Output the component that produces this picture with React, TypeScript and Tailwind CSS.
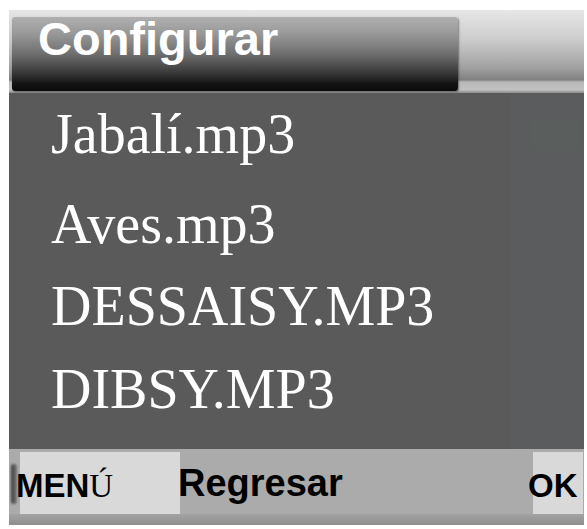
import React from "react";

const serif = { fontFamily: '"Liberation Serif", "Times New Roman", serif' };

export default function App() {
  const files = [
    { name: "Jabalí.mp3", mt: "mt-[14px]" },
    { name: "Aves.mp3", mt: "mt-[36px]" },
    { name: "DESSAISY.MP3", mt: "mt-[28px]" },
    { name: "DIBSY.MP3", mt: "mt-[29px]" },
  ];
  return (
    <div className="w-[587px] h-[529px] bg-white overflow-hidden font-['Liberation_Sans',Arial,sans-serif]">
      <div className="ml-[9px] pt-[10px] w-[575px] flex flex-col">
        {/* Header */}
        <div className="h-[83px] bg-[linear-gradient(to_bottom,#e6e6e6_0%,#cdcdcd_35%,#a0a0a0_70%,#808080_84%,#b8b8b8_87%,#c2c2c2_96%,#8a8a8a_100%)] flex items-start">
          <div className="ml-[3px] mt-[7px] w-[446px] h-[74px] rounded-[3px] bg-[linear-gradient(to_bottom,#b0b0b0_0%,#959595_25%,#6e6e6e_50%,#3a3a3a_75%,#141414_90%,#0a0a0a_100%)] shadow-[1px_1px_2px_rgba(0,0,0,0.4)]">
            <div className="pl-[26px] text-[47px] leading-[44px] font-bold text-white">
              Configurar
            </div>
          </div>
        </div>

        {/* Content */}
        <div className="h-[356px] flex bg-[#5a5a5a]">
          <div className="flex-1 flex flex-col pl-[42px]">
            {files.map((f) => (
              <div
                key={f.name}
                className={`${f.mt} text-[56px] leading-[54px] text-white whitespace-nowrap`}
                style={serif}
              >
                {f.name}
              </div>
            ))}
          </div>
          <div className="w-[73px] bg-[#5b5c5e] flex flex-col">
            <div className="mt-[27px] ml-[20px] w-[47px] h-[30px] bg-[#5a5f5e]" />
          </div>
        </div>

        {/* Bottom bar */}
        <div className="h-[65px] bg-[#ababab] flex items-start">
          <div className="w-[11px] h-full flex items-center">
            <div className="w-[6px] h-[40px] mt-[4px] ml-[2px] bg-[linear-gradient(to_right,#3a3a3a,#7a7a7a)] rounded-sm blur-[1px]" />
          </div>
          <div className="mt-[3px] w-[160px] h-[62px] bg-[#d9d9d9]">
            <div className="-ml-[4px] pt-[17px] text-[33px] leading-[33px] font-bold text-black whitespace-nowrap">
              MEN<span className="font-normal" style={serif}>Ú</span>
            </div>
          </div>
          <div className="-ml-[2px] pt-[16px] text-[38px] leading-[37px] font-bold text-black whitespace-nowrap">
            Regresar
          </div>
          <div className="flex-1" />
          <div className="mt-[3px] w-[50px] h-[62px] bg-[#d9d9d9] mr-[1px]">
            <div className="-ml-[5px] pt-[17px] text-[33px] leading-[33px] font-bold text-black whitespace-nowrap">
              OK
            </div>
          </div>
        </div>
        <div className="h-[11px] bg-[linear-gradient(to_bottom,#a3a3a3,#8e8e8e)]" />
      </div>
    </div>
  );
}
